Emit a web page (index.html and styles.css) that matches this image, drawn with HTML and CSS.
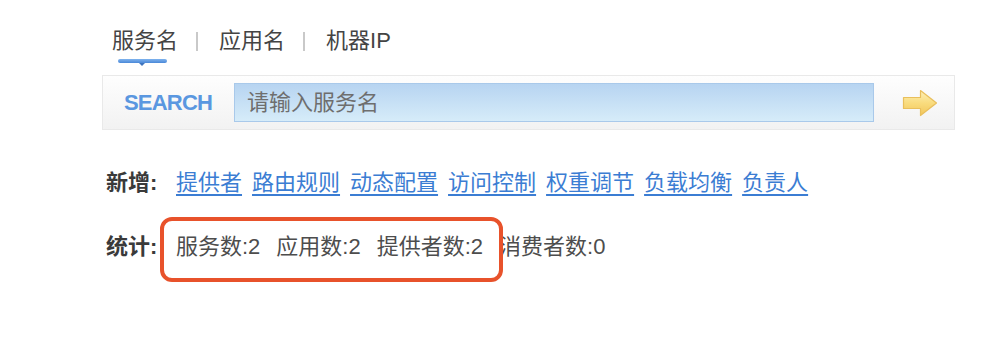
FILE: index.html
```html
<!DOCTYPE html>
<html lang="zh-CN">
<head>
<meta charset="utf-8">
<title>服务治理</title>
<link rel="stylesheet" href="styles.css">
</head>
<body>
<div class="page">
  <nav class="tabs">
    <span class="tab active">服务名</span><span class="sep"></span><span class="tab">应用名</span><span class="sep"></span><span class="tab">机器IP</span>
  </nav>
  <div class="search">
    <span class="search-label">SEARCH</span>
    <input class="search-input" type="text" placeholder="请输入服务名">
    <svg class="go" width="36" height="28" viewBox="0 0 36 28">
      <defs>
        <linearGradient id="ag" x1="0" y1="0" x2="0" y2="1">
          <stop offset="0" stop-color="#fdf0b8"/>
          <stop offset="0.5" stop-color="#f9dc7e"/>
          <stop offset="1" stop-color="#f2c65a"/>
        </linearGradient>
      </defs>
      <path d="M1.5 8.5 H18.5 V1.5 L34.5 14 L18.5 26.5 V19.5 H1.5 Z" fill="url(#ag)" stroke="#e9bf5c" stroke-width="1.2" stroke-linejoin="round"/>
    </svg>
  </div>
  <div class="row">
    <span class="label">新增:</span>
    <div class="links">
      <a href="#">提供者</a><a href="#">路由规则</a><a href="#">动态配置</a><a href="#">访问控制</a><a href="#">权重调节</a><a href="#">负载均衡</a><a href="#">负责人</a>
    </div>
  </div>
  <div class="row stats">
    <span class="label">统计:</span>
    <div class="items">
      <span>服务数:2</span><span>应用数:2</span><span>提供者数:2</span><span>消费者数:0</span>
    </div>
    <div class="highlight"></div>
  </div>
</div>
</body>
</html>
```
FILE: styles.css
```css
html, body {
  margin: 0;
  background: #ffffff;
}
body {
  min-height: 350px;
  font-family: "Liberation Sans", "Noto Sans CJK SC", sans-serif;
  font-size: 22px;
  color: #4d4d4d;
}
.page {
  width: 853px;
  padding: 28px 0 70px 102px;
}
.tabs {
  display: flex;
  align-items: center;
  height: 26px;
  line-height: 26px;
  padding-left: 10px;
  color: #444444;
}
.tab {
  position: relative;
}
.tab.active::after {
  content: "";
  position: absolute;
  left: 6px;
  top: 31px;
  width: 49px;
  height: 4px;
  border-radius: 2px;
  background: linear-gradient(#7fb3ee, #4a88d8);
}
.tab.active::before {
  content: "";
  position: absolute;
  left: 27px;
  top: 35px;
  border-left: 3px solid transparent;
  border-right: 3px solid transparent;
  border-top: 3px solid #3f74bd;
}
.sep {
  width: 2px;
  height: 19px;
  background: #c9c9c9;
  margin: 0 21px 0 18px;
}
.search {
  box-sizing: border-box;
  margin-top: 21px;
  height: 55px;
  border: 1px solid #e9e9e9;
  background: linear-gradient(#fefefe, #f2f2f2);
  display: flex;
  align-items: center;
  padding-left: 21px;
}
.search-label {
  width: 110px;
  font-weight: bold;
  font-size: 22px;
  letter-spacing: -0.8px;
  color: #5a97e0;
}
.search-input {
  box-sizing: border-box;
  width: 640px;
  height: 39px;
  margin: 0;
  border: 1px solid #a9c9ea;
  background: linear-gradient(#b7d4f1, #d6ecf9);
  padding: 0 0 0 12px;
  font-family: "Liberation Sans", "Noto Sans CJK SC", sans-serif;
  font-size: 22px;
  color: #555;
  outline: none;
}
.search-input::placeholder {
  color: #6e6e6e;
}
.go {
  margin-left: 28px;
  display: block;
}
.row {
  display: flex;
  align-items: center;
  height: 26px;
  line-height: 26px;
  padding-left: 4px;
  margin-top: 40px;
}
.label {
  width: 70px;
  flex: none;
  font-weight: bold;
  color: #3a3a3a;
}
.links {
  display: flex;
  gap: 10px;
}
.links a {
  color: #3b7dd3;
  text-decoration: underline;
  text-underline-offset: 4px;
}
.stats {
  position: relative;
  margin-top: 38px;
}
.items {
  display: flex;
  gap: 16px;
  color: #4d4d4d;
}
.highlight {
  position: absolute;
  left: 58px;
  top: -17px;
  width: 343px;
  height: 65px;
  box-sizing: border-box;
  border: 4px solid #e8522b;
  border-radius: 12px;
}
```
